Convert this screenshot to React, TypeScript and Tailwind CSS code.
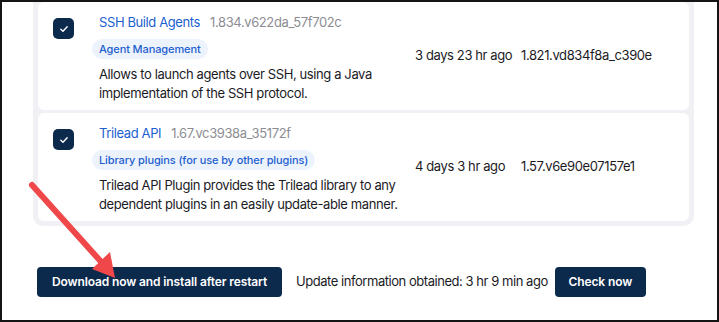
import React from "react";

type Plugin = {
  name: string;
  version: string;
  category: string;
  description: string;
  released: string;
  installed: string;
};

const plugins: Plugin[] = [
  {
    name: "SSH Build Agents",
    version: "1.834.v622da_57f702c",
    category: "Agent Management",
    description:
      "Allows to launch agents over SSH, using a Java implementation of the SSH protocol.",
    released: "3 days 23 hr ago",
    installed: "1.821.vd834f8a_c390e",
  },
  {
    name: "Trilead API",
    version: "1.67.vc3938a_35172f",
    category: "Library plugins (for use by other plugins)",
    description:
      "Trilead API Plugin provides the Trilead library to any dependent plugins in an easily update-able manner.",
    released: "4 days 3 hr ago",
    installed: "1.57.v6e90e07157e1",
  },
];

const Checkbox = () => (
  <div className="mt-[16px] flex h-[21px] w-[21px] shrink-0 items-center justify-center rounded-[5px] bg-[#0c2a4c]">
    <svg viewBox="0 0 12 12" className="h-[10px] w-[10px]" fill="none">
      <path
        d="M2.2 6.3 4.8 8.8 9.8 3.4"
        stroke="white"
        strokeWidth="1.7"
        strokeLinecap="round"
        strokeLinejoin="round"
      />
    </svg>
  </div>
);

const PluginRow = ({ plugin }: { plugin: Plugin }) => (
  <div className="flex items-start rounded-[6px] bg-white pl-[15px] text-[13px] tracking-[-0.03em] text-[#1b1b1f]">
    <Checkbox />
    <div className="ml-[25px] w-[312px] shrink-0 pt-[10px] pb-[7px]">
      <div className="flex items-baseline gap-[10px] leading-[20px]">
        <span className="text-[#1c5fcf]">{plugin.name}</span>
        <span className="text-[#8d8d93]">{plugin.version}</span>
      </div>
      <div className="-ml-[7px] mt-[7px] inline-flex h-[20px] items-center rounded-full bg-[#edf3fc] px-[7px] text-[11px] font-medium tracking-[-0.01em] text-[#1d5fcf]">
        {plugin.category}
      </div>
      <p className="mt-[6px] leading-[19px]">{plugin.description}</p>
    </div>
    <div className="ml-[4px] w-[106px] shrink-0 self-center">{plugin.released}</div>
    <div className="self-center">{plugin.installed}</div>
  </div>
);

export default function App() {
  return (
    <div className="relative h-[322px] w-[719px] overflow-hidden border-2 border-[#141414] bg-white font-['Inter','Liberation_Sans',sans-serif]">
      <div className="ml-[31px] w-[661px] rounded-b-[10px] bg-[#f1f1f5] px-[5px] pb-[5px]">
        <div className="flex flex-col gap-[3px]">
          {plugins.map((p) => (
            <PluginRow key={p.name} plugin={p} />
          ))}
        </div>
      </div>

      <div className="mt-[41px] flex items-center pl-[35px]">
        <button className="h-[30px] w-[245px] rounded-[4px] bg-[#0c2a4c] text-[12px] font-semibold tracking-[-0.01em] text-white">
          Download now and install after restart
        </button>
        <span className="ml-[14px] text-[13px] tracking-[-0.035em] text-[#1b1b1f]">
          Update information obtained: 3 hr 9 min ago
        </span>
        <button className="ml-[7px] h-[30px] w-[91px] rounded-[4px] bg-[#0c2a4c] text-[12px] font-semibold tracking-[-0.01em] text-white">
          Check now
        </button>
      </div>

      {/* annotation arrow */}
      <svg
        className="pointer-events-none absolute left-0 top-0"
        width="719"
        height="322"
        viewBox="0 0 719 322"
      >
        <line
          x1="30"
          y1="183"
          x2="102"
          y2="263"
          stroke="#f0474a"
          strokeWidth="6"
          strokeLinecap="round"
        />
        <polygon points="113,276 90,267 108,250" fill="#f0474a" />
      </svg>
    </div>
  );
}
